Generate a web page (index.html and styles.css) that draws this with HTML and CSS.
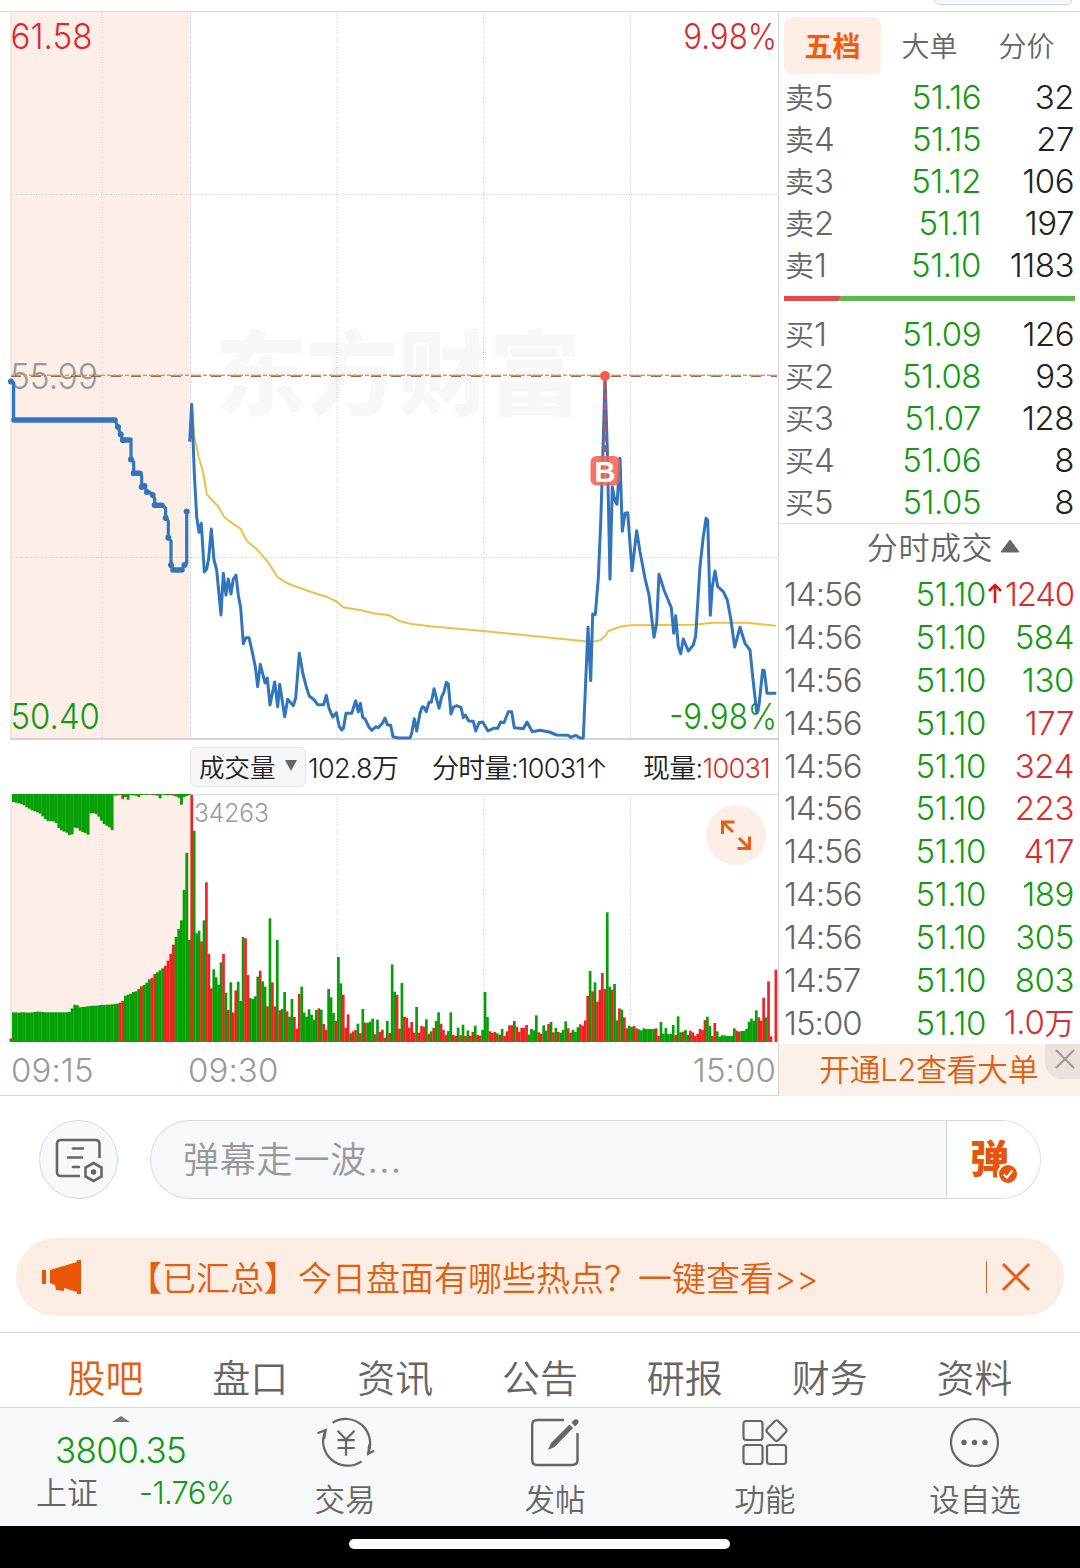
FILE: index.html
```html
<!DOCTYPE html>
<html lang="zh-CN">
<head>
<meta charset="utf-8">
<title>分时行情</title>
<link rel="stylesheet" href="styles.css">
</head>
<body>
<div class="page">
  <div class="topstrip"><div class="topstrip-pill"></div></div>

  <main class="market">
    <section class="charts">
      <svg class="price" viewBox="0 12 778 728" width="778" height="728">
        <rect x="11" y="12" width="179.500" height="727" fill="#fdeee7"/>
        <text class="mark" x="215" y="408" textLength="366">东方财富</text>
        <g class="grid">
          <path d="M102 12V739M190.500 12V739M337 12V739M483.500 12V739M630.500 12V739M11 194.500H778M11 557.500H778"/>
        </g>
        <path d="M11 12V739" stroke="#d9d9d9" fill="none"/>
        <path d="M10 739H778" stroke="#d5d5d5" stroke-width="2" fill="none"/>
        <text class="lbl mid" x="10" y="389" textLength="88" lengthAdjust="spacingAndGlyphs">55.99</text>
        <path d="M11 376.200H777" stroke="#8f6c5a" stroke-width="1.800" stroke-dasharray="10 10" fill="none"/>
        <path d="M11 375.200H777" stroke="#e8935f" stroke-width="1.500" stroke-dasharray="4 2" fill="none"/>
        <polyline class="avg" points="192.500,410 194.300,436.700 198.700,456.700 203.300,473.300 206.700,494 211,499 218.300,506.700 224,516.700 230,521.700 240.700,529 246.700,540.700 256.700,549.300 267.700,561.700 277.300,576.700 285,582 293.300,585.700 320,595 326.700,596.700 336.700,601.700 343.300,607.300 360,610 373.300,613.300 389.300,615.300 400,621.300 410,623.700 430,626.300 483.300,631 513.300,634 585,641.300 593,641.700 600,640.300 605,636 608.300,631 620,626.700 630,625.300 693.300,624.700 713.300,622.700 746.700,622.700 776,625.700"/>
        <text class="lbl up" x="10.500" y="49" textLength="82" lengthAdjust="spacingAndGlyphs">61.58</text>
        <text class="lbl up" transform="translate(777 49) scale(.88 1)" text-anchor="end">9.98%</text>
        <text class="lbl down" x="10.500" y="729" textLength="89.500" lengthAdjust="spacingAndGlyphs">50.40</text>
        <text class="lbl down" transform="translate(777 729) scale(.88 1)" text-anchor="end">-9.98%</text>
        <g id="auction"></g>
        <polyline class="line" points="189.700,441.700 191.700,404.300 194.300,473.300 196.700,516.700 199,532.300 201.300,523.300 204.300,572 206.700,569 208.700,558 211.300,529 214,560 216.700,570 221,615 223.300,573.300 226,595 228.300,579 231,594 233.300,579 236,575 238.300,595 240.700,608 243.300,643.700 246,637.700 249,637.700 252.300,652 255.300,666.700 257.700,686.700 260.300,664.300 265,683 267.300,678 270,705 274.700,682 277.700,706.700 279.700,684.300 284.700,716.700 287.700,699.300 293.300,705.700 295.700,698 299.300,653.300 303,674 306.700,688.300 309.300,696 314.300,700 317.700,704.700 323.700,704.700 326.300,695.300 329,708.300 332.700,717 336.300,712.700 339.300,726.700 341.700,730 343.500,728 346,713.300 351.700,713.300 355.700,700.700 358.300,712 360.300,703.300 362.700,717.300 365.300,719.300 368.700,726.700 371.700,730.300 376,726.700 378.300,727.700 382.700,722.700 385,718 387.300,724.700 390.700,725.300 393,736.700 398.300,738 410,738 411.700,733.300 414.300,718.700 416.700,731 420,713.300 422.300,706.700 424.300,707.700 426.300,711.700 429,702.300 431.300,702.300 434,688.700 439,708.300 441.700,696.700 444,692 446.300,682.300 448.300,684 451,714 453.300,707.300 456.300,705.700 461,707.300 463.300,717.700 465.300,715 468.700,721 473.300,721.300 475.700,731 479,722.700 482.700,722 488,731 493.300,728.300 497.700,728.300 500.700,722 504,722.700 508.300,711.700 511.700,711.700 514.300,727.700 523.300,728.700 527,722 532.300,731.700 540,730.300 549.300,732 556.700,735 568.300,735.300 570.700,737.300 575.700,735.300 580,738 583.300,738 588,627.300 590.700,680.700 592.700,614 595.300,614.700 598.300,578.300 600.700,523.300 603.300,440 605,375.700 607.300,450 610,579.300 612.300,486.700 614.700,500 617,504.300 620,458.300 622.300,531.300 625,513.300 627.700,512.700 632,570.700 636.700,530.700 640,551.700 645,578.300 649,595 654,637.300 656.700,623.300 659,574.300 664,590 671.300,607.700 673.700,633.300 675.700,615.700 678.300,646.700 680.700,653.700 683.300,639 688.300,651 693.300,645 695.700,636 700,566.700 703.300,536.700 706,518.300 707.700,520 710.300,615.300 712.300,586.700 715,571 717.700,586.700 723.300,591.700 727.300,600 730.700,618.300 734.700,647 740,627.300 745,643.300 750,650 752.700,676.700 756.700,712.300 759,705 762.700,670 764.300,670.700 767,693.300 776.300,693.300"/>
        <circle cx="605" cy="376" r="5" fill="#f75a47"/>
        <path d="M605 382V455" stroke="#e8483c" stroke-width="2.500" stroke-dasharray="7 3.500" fill="none"/>
        <rect x="590.500" y="456" width="29.500" height="29.500" rx="6" fill="#f5604c" fill-opacity=".86"/>
        <text class="buy" x="594.500" y="481.500" textLength="21" lengthAdjust="spacingAndGlyphs">B</text>
      </svg>

      <div class="info">
        <span class="picker">成交量<i class="caret"></i></span>
        <span class="info-total">102.8万</span>
        <span class="info-minute">分时量:10031↑</span>
        <span class="info-now">现量:<b>10031</b></span>
      </div>

      <svg class="volume" viewBox="0 794 778 248" width="778" height="248">
        <rect x="11" y="794" width="179.500" height="248" fill="#fdeee7"/>
        <g class="grid"><path d="M102 794V1042M190.500 794V1042M337 794V1042M483.500 794V1042M630.500 794V1042"/></g>
        <path d="M11 794V1042" stroke="#d9d9d9" fill="none"/>
        <path d="M11 794.500H778" stroke="#dcdcdc" fill="none"/>
        <g id="bars"></g>
        <text class="peak" x="194" y="822" textLength="75" lengthAdjust="spacingAndGlyphs">34263</text>
        <circle cx="736" cy="835" r="30" fill="#fdeee7"/>
        <path d="M722.500 834V822H734.500M722.500 822L733 832M749.500 836.500V848.500H737.500M749.500 848.500L739 838" fill="none" stroke="#e65f12" stroke-width="3"/>
      </svg>

      <div class="axis"><span class="t1">09:15</span><span class="t2">09:30</span><span class="t3">15:00</span></div>
    </section>

    <aside class="quotes">
      <div class="tabs"><span class="tab on">五档</span><span class="tab">大单</span><span class="tab">分价</span></div>
      <div class="book">
        <div class="row"><span>卖<em>5</em></span><b>51.16</b><i>32</i></div>
        <div class="row"><span>卖<em>4</em></span><b>51.15</b><i>27</i></div>
        <div class="row"><span>卖<em>3</em></span><b>51.12</b><i>106</i></div>
        <div class="row"><span>卖<em>2</em></span><b>51.11</b><i>197</i></div>
        <div class="row"><span>卖<em>1</em></span><b>51.10</b><i>1183</i></div>
      </div>
      <div class="ratio"><svg width="291" height="5" viewBox="0 0 291 5"><path d="M0 0H58L54 5H0Z" fill="#e34a4b"/><path d="M58 0H291V5H54Z" fill="#5fb64c"/></svg></div>
      <div class="book">
        <div class="row"><span>买<em>1</em></span><b>51.09</b><i>126</i></div>
        <div class="row"><span>买<em>2</em></span><b>51.08</b><i>93</i></div>
        <div class="row"><span>买<em>3</em></span><b>51.07</b><i>128</i></div>
        <div class="row"><span>买<em>4</em></span><b>51.06</b><i>8</i></div>
        <div class="row"><span>买<em>5</em></span><b>51.05</b><i>8</i></div>
      </div>
      <div class="deals-head">分时成交<svg width="20" height="14" viewBox="0 0 20 14"><path d="M10 1L19 13H1Z" fill="#666" stroke="#666" stroke-linejoin="round"/></svg></div>
      <div class="deals">
        <div class="deal"><span>14:56</span><b>51.10</b><svg class="rise" width="14" height="21" viewBox="0 0 14 21"><path d="M7 20V2M1 8L7 2L13 8" fill="none" stroke="#e01414" stroke-width="2.600"/></svg><i class="up tight">1240</i></div>
        <div class="deal"><span>14:56</span><b>51.10</b><i>584</i></div>
        <div class="deal"><span>14:56</span><b>51.10</b><i>130</i></div>
        <div class="deal"><span>14:56</span><b>51.10</b><i class="up">177</i></div>
        <div class="deal"><span>14:56</span><b>51.10</b><i class="up">324</i></div>
        <div class="deal"><span>14:56</span><b>51.10</b><i class="up">223</i></div>
        <div class="deal"><span>14:56</span><b>51.10</b><i class="up">417</i></div>
        <div class="deal"><span>14:56</span><b>51.10</b><i>189</i></div>
        <div class="deal"><span>14:56</span><b>51.10</b><i>305</i></div>
        <div class="deal"><span>14:57</span><b>51.10</b><i>803</i></div>
        <div class="deal"><span>15:00</span><b>51.10</b><i class="up">1.0<em>万</em></i></div>
      </div>
      <div class="l2">开通L2查看大单
        <span class="l2-close"><svg width="20" height="20" viewBox="0 0 20 20"><path d="M1 1L19 19M19 1L1 19" stroke="#a29a97" stroke-width="2.200"/></svg></span>
      </div>
    </aside>
  </main>

  <section class="danmu">
    <div class="round">
      <svg width="50" height="46" viewBox="0 0 50 46" fill="none" stroke="#666" stroke-width="2.600">
        <path d="M25 38H6Q2 38 2 34V6Q2 2 6 2H40.500Q44.500 2 44.500 6V20"/>
        <path d="M18 10.500H28M13 19.500H27M18 29H24" stroke-linecap="round"/>
        <path d="M38.500 25L46.500 29.500V38.500L38.500 43L30.500 38.500V29.500Z"/>
        <circle cx="38.500" cy="34" r="2.700" fill="#666" stroke="none"/>
      </svg>
    </div>
    <div class="field">
      <span class="field-text">弹幕走一波<span class="dots">…</span></span>
      <span class="field-send">
        <span class="send-glyph">弹</span>
        <svg class="send-tick" width="22" height="22" viewBox="0 0 22 22"><circle cx="11" cy="11" r="10" fill="#e8550a" stroke="#fff" stroke-width="2"/><path d="M6.500 11.500L10 14.500L15.500 7.500" fill="none" stroke="#fff" stroke-width="2.200"/></svg>
      </span>
    </div>
  </section>

  <section class="notice">
    <svg width="42" height="36" viewBox="0 0 42 36" fill="#e95504"><path d="M1 11H5V25H1ZM9 11L36 3V1H40V35H36V33L23 29V32L15 31L14 26L9 24Z"/></svg>
    <span class="notice-text">【已汇总】今日盘面有哪些热点？一键查看&gt;&gt;</span>
    <span class="notice-line"></span>
    <svg width="30" height="30" viewBox="0 0 30 30"><path d="M2 2L28 28M28 2L2 28" stroke="#e95d12" stroke-width="3"/></svg>
  </section>

  <nav class="sections"><span class="on">股吧</span><span>盘口</span><span>资讯</span><span>公告</span><span>研报</span><span>财务</span><span>资料</span></nav>

  <footer class="dock">
    <div class="index">
      <i class="index-caret"></i>
      <div class="index-value">3800.35</div>
      <div class="index-line"><span>上证</span><b>-1.76%</b></div>
    </div>
    <div class="item">
      <svg width="60" height="52" viewBox="0 0 60 52" fill="none" stroke="#666" stroke-width="2.200">
        <path d="M17.600 6.700A24.500 24.500 0 0 1 53 37.500M54.500 28L53 38L59 34.700M46.600 45.300A24.500 24.500 0 0 1 10.800 14M2.500 17.300L10.800 14L9 23"/>
        <path d="M22.500 14.700L31 23.500L39.500 14.700M31 23.500V39.700M22.500 24.200H39.700M22.500 32H39.700"/>
      </svg>
      <span>交易</span>
    </div>
    <div class="item">
      <svg width="50" height="52" viewBox="0 0 50 52" fill="none" stroke="#666" stroke-width="2.400">
        <path d="M34 4H7Q2.200 4 2.200 9V44Q2.200 49 7 49H42Q47.500 49 47.500 44V17"/>
        <path d="M18 34L21 27L39.500 8.500L43 12L24.500 31ZM41.500 6.500L44.500 3.500Q49 2.500 48.500 7L45 10.500Z" fill="#666" stroke="none"/>
      </svg>
      <span>发帖</span>
    </div>
    <div class="item">
      <svg width="46" height="52" viewBox="0 0 46 52" fill="none" stroke="#666" stroke-width="2.200">
        <rect x="1.500" y="5" width="19" height="19" rx="2.500"/><rect x="1.500" y="29" width="19" height="19" rx="2.500"/><rect x="25" y="29" width="19" height="19" rx="2.500"/>
        <path d="M32.500 5.500Q34.500 3 36.500 5.500L43.500 12.500Q45.500 14.500 43.500 16.500L36.500 24Q34.500 26 32.500 24L25.500 16.500Q23.500 14.500 25.500 12.500Z"/>
      </svg>
      <span>功能</span>
    </div>
    <div class="item">
      <svg width="50" height="52" viewBox="0 0 50 52"><circle cx="24.500" cy="26.500" r="23.500" fill="none" stroke="#666" stroke-width="2.200"/><g fill="#666"><circle cx="14" cy="26.500" r="2.700"/><circle cx="24.500" cy="26.500" r="2.700"/><circle cx="35" cy="26.500" r="2.700"/></g></svg>
      <span>设自选</span>
    </div>
  </footer>
  <div class="homebar"><i></i></div>
</div>
<script src="script.js"></script>
</body>
</html>
```
FILE: styles.css
```css
* { box-sizing: border-box; }
body { margin: 0; background: #fff; font-family: Inter, "Noto Sans CJK SC", sans-serif; font-weight: 350; color: #666; }
i, em { font-style: normal; }
b { font-weight: inherit; }
svg { display: block; flex: none; }
.page { width: 1080px; height: 1568px; overflow: hidden; display: flex; flex-direction: column; }

.topstrip { height: 12px; border-bottom: 1px solid #dadada; padding-left: 934px; flex: none; }
.topstrip-pill { width: 138px; height: 5px; background: #f6f7f9; border: 1px solid #d3d5d9; border-top: 0; border-radius: 0 0 7px 7px; }

.market { display: flex; height: 1084px; border-bottom: 1px solid #d8d8d8; flex: none; }
.charts { width: 779px; border-right: 1px solid #d6d6d6; display: flex; flex-direction: column; }
.grid path { stroke: #cfcaca; stroke-width: 1; stroke-dasharray: 1 1.500; fill: none; }
.mark { font-family: "Noto Sans CJK SC", sans-serif; font-weight: 900; font-size: 92px; fill: #f7f7f7; }
.lbl { font-size: 35.500px; }
.lbl.mid { fill: #999; }
.up { fill: #d92c2c; color: #d92c2c; }
.lbl.down { fill: #129a12; }
.line { fill: none; stroke: #3275bf; stroke-width: 3; stroke-linejoin: round; }
.avg { fill: none; stroke: #f0bf48; stroke-width: 2; }
.buy { font-family: "Liberation Sans", sans-serif; font-weight: 700; font-size: 29px; fill: #fff; }
.peak { font-size: 26px; fill: #999; }

.info { height: 54px; display: flex; align-items: center; padding: 0 0 2px 190px; font-size: 27px; color: #222; white-space: nowrap; letter-spacing: -.7px; }
.picker { width: 116px; height: 40px; margin-top: 1px; background: #f6f7f9; border: 1px solid #e2e4e8; border-radius: 6px; display: flex; align-items: center; justify-content: space-between; padding: 0 8px 2px; font-size: 25.500px; letter-spacing: 0; }
.caret { border: 6.500px solid transparent; border-top: 11px solid #666; border-bottom: 0; }
.info-total { width: 124px; padding-left: 2px; }
.info-minute { width: 213px; padding-left: 2px; }
.info-now b { color: #d92c2c; }

.axis { height: 53px; display: flex; align-items: center; font-size: 33px; letter-spacing: .1px; color: #999; padding: 2px 2px 0 11px; }
.t1 { width: 177px; }
.t3 { margin-left: auto; }

.quotes { width: 301px; font-size: 33px; }
.tabs { height: 64px; padding: 5px 0 2px 5px; display: flex; }
.tab { width: 97px; height: 57px; display: flex; align-items: center; justify-content: center; font-size: 28px; padding-bottom: 1px; }
.tab.on { background: #feeee6; border-radius: 8px; color: #f35b06; font-weight: 700; }
.row { height: 42px; display: grid; grid-template-columns: 80px 116px 1fr; align-items: center; padding: 0 6px 0 6px; letter-spacing: -.5px; }
.row span { font-size: 29px; letter-spacing: 0; line-height: 38px; padding-top: 2px; }
.row em { font-size: 33px; }
.row b, .row i, .deal b, .deal i { text-align: right; }
.row b { color: #129a12; }
.row i { color: #222; }
.ratio { height: 27px; padding: 10px 0 0 5px; }
.deals-head { height: 50px; border-top: 1px solid #e2e2e2; display: flex; align-items: center; justify-content: center; gap: 7px; padding: 0 0 6px 28px; font-size: 31px; letter-spacing: .6px; }
.deals { height: 471px; display: grid; grid-template-rows: repeat(11, minmax(0, 1fr)); }
.deal { position: relative; display: grid; grid-template-columns: 85px 117px 1fr; align-items: center; padding: 0 6px 0 5px; letter-spacing: -.4px; line-height: 40px; }
.deal span { letter-spacing: -1px; }
.deal b, .deal i { color: #129a12; }
.deal i.up { color: #d92c2c; white-space: nowrap; }
.deal i.tight { letter-spacing: -1.200px; }
.deal em { font-size: 30px; }
.rise { position: absolute; left: 209px; top: 10px; }
.l2 { position: relative; height: 52px; background: #fcf0ea; color: #e0600f; font-size: 31px; padding: 0 0 0 40px; line-height: 52px; white-space: nowrap; letter-spacing: -.4px; }
.l2-close { position: absolute; right: 0; top: 0; width: 35px; height: 35px; background: #ece1dc; border-radius: 0 0 0 17px; display: flex; align-items: center; justify-content: center; padding: 0 0 5px 5px; }

.danmu { display: flex; gap: 32px; padding: 24px 39px 0; flex: none; height: 142px; }
.round { width: 79px; height: 79px; border: 1px solid #d6d9dc; border-radius: 50%; background: #f7f8fa; display: flex; align-items: center; justify-content: center; padding: 2px 0 0 2px; }
.field { flex: 1; height: 79px; border: 1px solid #d6d9dc; border-radius: 40px; background: #f7f8fa; display: flex; overflow: hidden; }
.field-text { flex: 1; padding-left: 32px; font-size: 36px; line-height: 79px; color: #999; letter-spacing: .8px; }
.dots { font-size: 41px; line-height: 1; }
.field-send { position: relative; width: 94px; background: #fff; border-left: 1px solid #cfd2d8; }
.send-glyph { position: absolute; left: 23px; top: 16px; font-size: 39px; line-height: 44px; font-weight: 900; color: #e8550a; }
.send-tick { position: absolute; left: 50px; top: 42px; }

.notice { height: 78px; margin: 0 16px; background: #fcede4; border-radius: 39px; display: flex; align-items: center; padding: 0 33px 0 25px; color: #e0600f; flex: none; }
.notice-text { margin-left: 45px; flex: 1; font-size: 34px; line-height: 50px; padding-top: 3px; white-space: nowrap; }
.notice-line { width: 1px; height: 32px; background: #c96a2c; margin-right: 14px; }

.sections { margin-top: 16px; height: 75px; border-top: 1px solid #d8d8d8; padding: 16px 33px 0; display: grid; grid-template-columns: repeat(7, 1fr); flex: none; align-items: center; text-align: center; font-size: 38px; }
.sections span { line-height: 56px; }
.sections .on { color: #e0600f; }

.dock { height: 119px; background: #f7f8fa; border-top: 1px solid #d3dad6; display: grid; grid-template-columns: 240px repeat(4, 210px); flex: none; }
.index { display: flex; flex-direction: column; align-items: center; padding-top: 8px; }
.index-caret { border: 9px solid transparent; border-bottom: 6px solid #777; border-top: 0; margin-left: 2px; }
.index-value { font-size: 35px; line-height: 42px; margin-top: 7px; color: #129a12; letter-spacing: -.7px; padding-left: 1px; }
.index-line { display: flex; width: 240px; padding: 0 6px 0 36px; justify-content: space-between; font-size: 31px; line-height: 44px; }
.index-line b { color: #129a12; letter-spacing: -.7px; }
.item { display: flex; flex-direction: column; align-items: center; padding-top: 8px; font-size: 30.500px; }
.item span { line-height: 44px; margin-top: 10px; }
.homebar { flex: 1; background: #000; display: flex; padding: 13px 0 0 349px; }
.homebar i { width: 381px; height: 10px; border-radius: 5px; background: #fff; }
```
FILE: script.js
```js
const NS = "http://www.w3.org/2000/svg";
const RED = "#f02323", GREEN = "#05a005";
function add(parent, tag, attrs) {
  const el = document.createElementNS(NS, tag);
  for (const k in attrs) el.setAttribute(k, attrs[k]);
  parent.appendChild(el);
}

// Call auction price steps
const auction = [[11,381.5],[13.6,383],[13.6,420],[115,420],[118,427],[120.7,434.5],[123,440],[130,440],[131,443],[131,459.5],[133.7,462],[133.7,473.3],[140,473.3],[141.7,476],[141.7,487],[144.5,486],[147,492],[150,492.5],[152.7,495],[154.7,499],[154.7,505],[162.7,505.7],[165.5,508],[165.7,518],[168.3,521],[168.3,537.7],[171,541],[171,565],[173,570],[181.7,570],[184.5,565],[186.7,563],[186.7,511.5]];
const ag = document.getElementById("auction");
add(ag, "polyline", { points: auction.join(" "), fill: "none", stroke: "#3275bf", "stroke-width": 3.2 });
add(ag, "path", { d: "M14 420H115M123 440H130M134 473.3H140M155 505.3H162M173 570H182", stroke: "#3275bf", "stroke-width": 5.6, "stroke-linecap": "round" });
for (const i of [0,4,5,6,9,11,14,15,16,18,20,23,25,27,30,32])
  add(ag, "circle", { cx: auction[i][0], cy: auction[i][1], r: 3, fill: "#3275bf" });

// Volume bars: each entry is a bar top in thirds of a pixel, "r" marks a rising minute
const bars = document.getElementById("bars");
function draw(text, x0, step, base) {
  text.trim().split(/\s+/).forEach((s, i) => {
    const h = (base - parseInt(s)) / 3;
    if (h > 0) add(bars, "rect", { x: (x0 + i * step).toFixed(2), y: (1042 - h).toFixed(2), width: (step + 0.25).toFixed(2), height: h.toFixed(2), fill: s.endsWith("r") ? RED : GREEN });
  });
}
draw("817 817 818 817 817 818 818 817 816 815 815 816 817 817 817 817 817 817 817 817 817 816 805 794 796 802 801 800 799 798 797 797 796 795 795 794 794 793 792 791 788r 783r 767 764 761 756 754 747 739r 735 728 718 714r 702r 697 691 685 677r 662r 642r 614r 591 567 541 450 339 600", 12, 8 / 3, 906);
draw("165r 272 580 572 604r 541 427r 642r 745r 688 712 734 667 642r 758 810r 727 817r 751r 725 783 591 595r 705r 774 777 769 710 692r 724 740 799r 535 727r 799r 600 811r 807 756 814r 830 777 831r 866r 762r", 190.4, 2.444, 906);
draw("320 398 410 388 404 419 390 385r 389 432r 450r 327 352 399 423r 231 310 344r 443r 403r 460 454r 450r 431 460r 387 428r 428 425 416 463r 419 456r 449r 473r 423 459r 253 335 345r 446r 309 410r 413r 443r 426r 458r 381 458r 438r 440r 418 462r 454 444r 423 397 431r 450r 465r 453 397 465r 468r 443 466r 434 468r 451 467r 456r 437 465r 467r 450 336 411 454r 458r 456r 460 464r 447 468r 454r 436r 436r 423 440r 456r 444r 443r 435r 464 447 451 406", 190.4 + 45 * 2.444, 2.444, 486);
draw("877r 881r 856 872 852r 846 877r 864 876r 878 870 844 865r 878r 870 876 862 853r 858r 841r 768r 693 754r 727 785r 750r 699r 747r 517 740 749r 732 841 805r 809 832r 865r 857 861 858r 865r 868 871 865 867 867 867 867 865r 888r 846 881 864 882 882 855 885r 829 877 875r 870 885 872r 877r 888r 882r 867r 870r 840r 830 858 888r 849r 874 890 886 886 888 888 888 865 872r 875r 873 873 867 846 836 842 811 832r 842r 773r 832 724r 889r 906 689r", 190.4 + 142 * 2.444, 2.444, 906);
add(bars, "rect", { x: 9.5, y: 1038.5, width: 2.5, height: 3.5, fill: RED });

// Unmatched auction volume hangs from the top edge
"186 188 190 192 196 202 206 211 214 217 221 229 237 243 243 244 249 264 271 275 278 285 283 263 264 272 276 279 284 220 219 222 230 242 252 257 262 270 167 166 165 177r 171 179 165 166 167 171 165 164 165 164 165r 165r 167 175 164 165 166 165 167r 169 173 194 171 168 165".split(" ").forEach((s, i) => {
  add(bars, "rect", { x: (12 + i * 8 / 3).toFixed(2), y: 794, width: 2.9, height: ((parseInt(s) - 162) / 3).toFixed(2), fill: s.endsWith("r") ? RED : GREEN });
});
```
